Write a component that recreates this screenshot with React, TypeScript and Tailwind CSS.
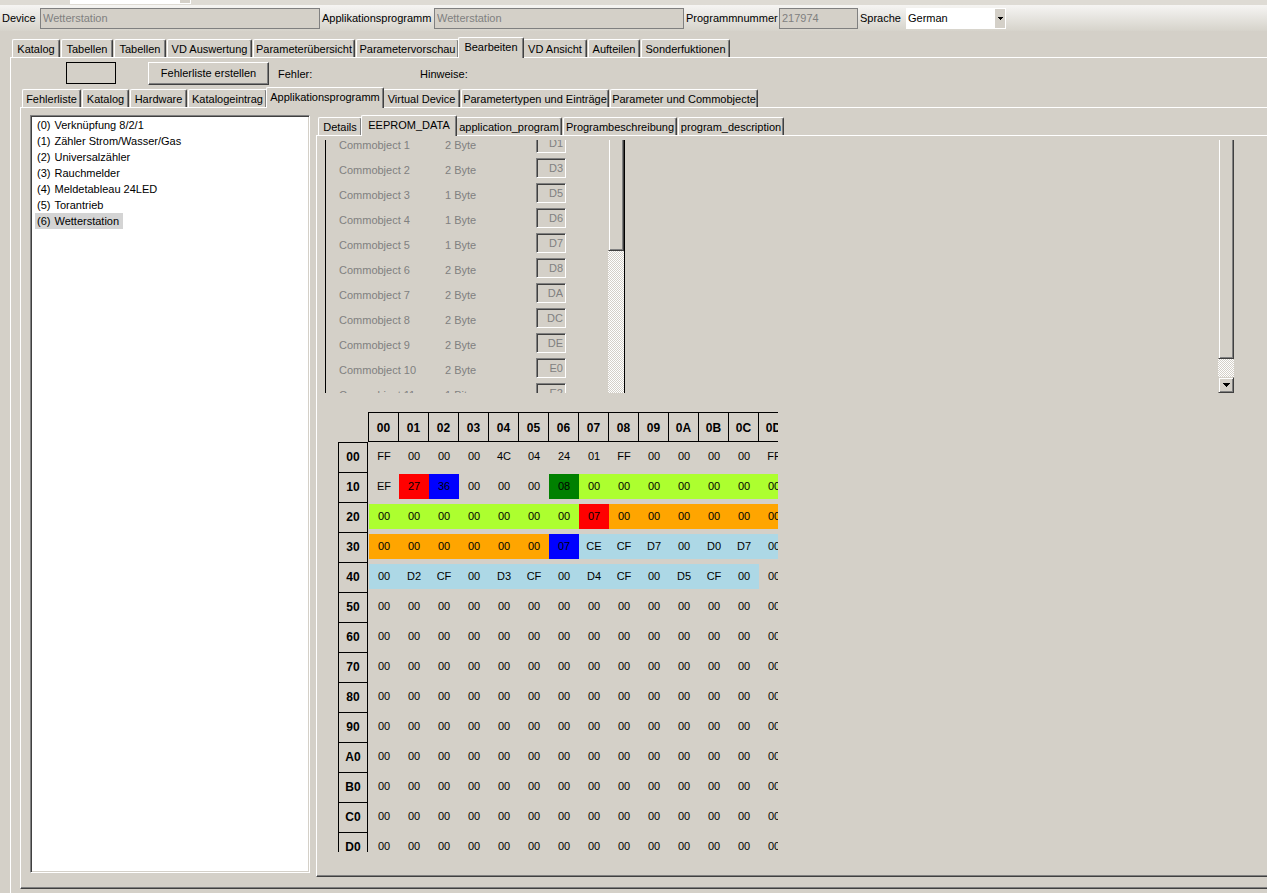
import React, { useId } from "react";

type Tab = [label: string, width: string];

const ROW1: Tab[] = [
  ["Katalog", "w-12"],
  ["Tabellen", "w-[52px]"],
  ["Tabellen", "w-[52px]"],
  ["VD Auswertung", "w-[85px]"],
  ["Parameterübersicht", "w-[102px]"],
  ["Parametervorschau", "w-[103px]"],
  ["Bearbeiten", "w-[66px]"],
  ["VD Ansicht", "w-16"],
  ["Aufteilen", "w-[52px]"],
  ["Sonderfuktionen", "w-[89px]"],
];
const ROW2: Tab[] = [
  ["Fehlerliste", "w-[59px]"],
  ["Katalog", "w-[47px]"],
  ["Hardware", "w-[57px]"],
  ["Katalogeintrag", "w-[79px]"],
  ["Applikationsprogramm", "w-[118px]"],
  ["Virtual Device", "w-[77px]"],
  ["Parametertypen und Einträge", "w-[148px]"],
  ["Parameter und Commobjecte", "w-[148px]"],
];
const ROW3: Tab[] = [
  ["Details", "w-11"],
  ["EEPROM_DATA", "w-24"],
  ["application_program", "w-[106px]"],
  ["Programbeschreibung", "w-[114px]"],
  ["program_description", "w-[106px]"],
];

const PROGRAMS = ["Verknüpfung 8/2/1", "Zähler Strom/Wasser/Gas", "Universalzähler", "Rauchmelder", "Meldetableau 24LED", "Torantrieb", "Wetterstation"];

const OBJECTS: [string, string, string][] = [
  ["Commobject 1", "2 Byte", "D1"],
  ["Commobject 2", "2 Byte", "D3"],
  ["Commobject 3", "1 Byte", "D5"],
  ["Commobject 4", "1 Byte", "D6"],
  ["Commobject 5", "1 Byte", "D7"],
  ["Commobject 6", "2 Byte", "D8"],
  ["Commobject 7", "2 Byte", "DA"],
  ["Commobject 8", "2 Byte", "DC"],
  ["Commobject 9", "2 Byte", "DE"],
  ["Commobject 10", "2 Byte", "E0"],
  ["Commobject 11", "1 Bit", "E2"],
];

const COLS = ["00", "01", "02", "03", "04", "05", "06", "07", "08", "09", "0A", "0B", "0C", "0D"];
const ROWS = ["00", "10", "20", "30", "40", "50", "60", "70", "80", "90", "A0", "B0", "C0", "D0"];

const BYTES: Record<string, string> = {
  "00": "FF 00 00 00 4C 04 24 01 FF 00 00 00 00 FF",
  "10": "EF 27 36 00 00 00 08 00 00 00 00 00 00 00",
  "20": "00 00 00 00 00 00 00 07 00 00 00 00 00 00",
  "30": "00 00 00 00 00 00 07 CE CF D7 00 D0 D7 00",
  "40": "00 D2 CF 00 D3 CF 00 D4 CF 00 D5 CF 00 00",
};
const EMPTY = "00 00 00 00 00 00 00 00 00 00 00 00 00 00";

// One letter per byte: the memory area it belongs to.
const AREAS: Record<string, string> = {
  "10": ".rb...dggggggg",
  "20": "gggggggroooooo",
  "30": "oooooobllllllll",
  "40": "lllllllllllll.",
};
const AREA_CLASS: Record<string, string> = {
  r: "bg-[#ff0000]",
  b: "bg-[#0000ff]",
  d: "bg-[#008000]",
  g: "bg-[#adff2f]",
  o: "bg-[#ffa500]",
  l: "bg-[#add8e6]",
};

function Tabs({ items, selected, label }: { items: Tab[]; selected: number; label: string }) {
  return (
    <div role="tablist" aria-label={label} className="flex h-5 shrink-0 items-end gap-px pl-0.5">
      {items.map(([text, width], i) => (
        <button
          key={i}
          type="button"
          role="tab"
          aria-selected={i === selected}
          className={
            "flex shrink-0 items-center justify-center whitespace-nowrap rounded-t-[2px] border-t border-l border-r border-t-white border-l-white border-r-[#404040] bg-[#d4d0c8] shadow-[inset_-1px_0_0_#808080] " +
            (i === selected ? "relative z-10 -mx-0.5 -mb-px h-[21px] pb-0.5 " : "h-[18px] pt-0.5 ") +
            width
          }
        >
          {text}
        </button>
      ))}
    </div>
  );
}

function Field({ label, value, labelWidth, width }: { label: string; value: string; labelWidth: string; width: string }) {
  const id = useId();
  return (
    <>
      <label htmlFor={id} className={"shrink-0 whitespace-nowrap pl-0.5 " + labelWidth}>{label}</label>
      <input id={id} disabled value={value} readOnly className={"h-[21px] shrink-0 border border-[#808080] bg-[#d4d0c8] px-0.5 text-[#808080] " + width} />
    </>
  );
}

const RAISED = "border border-t-[#d4d0c8] border-l-[#d4d0c8] border-b-[#404040] border-r-[#404040] bg-[#d4d0c8] shadow-[inset_1px_1px_0_#fff,inset_-1px_-1px_0_#808080]";
const THUMB = "w-4 shrink-0 border border-t-0 border-l-[#d4d0c8] border-b-[#404040] border-r-[#404040] bg-[#d4d0c8] shadow-[inset_1px_0_0_#fff,inset_-1px_-1px_0_#808080]";
const TRACK = "bg-[repeating-conic-gradient(#fff_0_25%,#d4d0c8_0_50%)] bg-[length:2px_2px]";

function Arrow() {
  return (
    <svg width="7" height="4" viewBox="0 0 7 4" shapeRendering="crispEdges" aria-hidden="true">
      <path d="M0 0h7v1H0zM1 1h5v1H1zM2 2h3v1H2zM3 3h1v1H3z" fill="#000" />
    </svg>
  );
}

function CommObjects() {
  return (
    <div className="flex h-[253px] w-[909px] shrink-0 justify-between overflow-hidden">
      <div className="flex w-[300px] justify-between border-x border-black">
        <div className="-mt-[7px] ml-[13px] flex flex-col gap-[5px]">
          {OBJECTS.map(([name, size, addr]) => (
            <div key={name} className="flex h-5 shrink-0 text-[#808080]">
              <label htmlFor={name} className="w-[106px] pt-1.5">{name}</label>
              <span className="w-[91px] pt-1.5">{size}</span>
              <input
                id={name}
                disabled
                readOnly
                value={addr}
                className="h-5 w-[30px] border border-t-[#808080] border-l-[#808080] border-r-white border-b-white bg-[#d4d0c8] pr-0.5 text-right shadow-[inset_1px_1px_0_#404040]"
              />
            </div>
          ))}
        </div>
        <div className={"flex w-4 flex-col " + TRACK}>
          <div className={"h-[111px] " + THUMB} />
        </div>
      </div>
      <div className={"flex w-4 flex-col justify-between " + TRACK}>
        <div className={"h-[219px] " + THUMB} />
        <button type="button" aria-label="Nach unten" className={"flex h-4 w-4 items-center justify-center " + RAISED}>
          <Arrow />
        </button>
      </div>
    </div>
  );
}

function HexView() {
  return (
    <div className="ml-[13px] min-h-0 w-[440px] flex-1 overflow-hidden">
      <table className="w-[451px] table-fixed border-separate border-spacing-0 text-center">
        <thead>
          <tr className="h-[30px]">
            <td className="w-[31px] border-r border-black p-0" />
            {COLS.map((c) => (
              <th key={c} scope="col" className="w-[30px] border-y border-r border-black p-0 pt-0.5 text-xs leading-[13px] font-bold">{c}</th>
            ))}
          </tr>
        </thead>
        <tbody>
          {ROWS.map((r) => (
            <tr key={r} className="h-[30px]">
              <th scope="row" className="p-0 text-xs leading-[13px] font-bold">
                <div className="flex h-[30px] w-[30px] items-center justify-center border-x border-t border-black">{r}</div>
              </th>
              {(BYTES[r] ?? EMPTY).split(" ").map((b, i) => (
                <td key={i} className="p-0 pb-px">
                  <div className={"flex h-[25px] items-center justify-center " + (AREA_CLASS[(AREAS[r] ?? "")[i]] ?? "")}>{b}</div>
                </td>
              ))}
            </tr>
          ))}
        </tbody>
      </table>
    </div>
  );
}

export default function App() {
  return (
    <div className="flex h-screen flex-col overflow-hidden bg-[#d4d0c8] font-['Liberation_Sans',Arial,sans-serif] text-[11px] leading-[13px] text-black">
      <div className="flex h-[5px] shrink-0 items-start bg-[#dedbd4] pl-[70px]">
        <div className="flex h-1 w-[121px] justify-end border-r border-b border-white bg-white">
          <div className="h-[3px] w-2.5 bg-[#d4d0c8]" />
        </div>
      </div>

      <div className="flex h-[26px] shrink-0 items-center bg-linear-to-b from-[#f6f5f3] to-[#d6d3cb]">
        <Field label="Device" value="Wetterstation" labelWidth="w-10" width="w-[280px]" />
        <Field label="Applikationsprogramm" value="Wetterstation" labelWidth="w-[114px]" width="w-[250px]" />
        <Field label="Programmnummer" value="217974" labelWidth="w-[95px]" width="w-[79px]" />
        <label htmlFor="lang" className="w-12 shrink-0 pl-0.5">Sprache</label>
        <div className="relative h-[21px] w-[100px] shrink-0">
          <select id="lang" defaultValue="German" className="h-[21px] w-full appearance-none bg-white pl-0.5">
            <option>German</option>
          </select>
          <span className="pointer-events-none absolute top-px right-px flex h-[19px] w-2.5 items-center justify-center bg-[#d4d0c8]">
            <svg width="5" height="3" viewBox="0 0 5 3" shapeRendering="crispEdges" aria-hidden="true">
              <path d="M0 0h5v1H0zM1 1h3v1H1zM2 2h1v1H2z" fill="#000" />
            </svg>
          </span>
        </div>
      </div>

      <div className="mt-1.5 ml-2.5 flex min-h-0 flex-1 flex-col">
        <Tabs items={ROW1} selected={6} label="Bereiche" />
        <div className="flex min-h-0 flex-1 flex-col border-t border-l border-white pb-1 pl-[9px]">
          <div className="flex h-[29px] shrink-0 items-start pt-1">
            <div className="ml-[46px] h-[22px] w-[50px] border border-black" />
            <button type="button" className="ml-8 h-[23px] w-[121px] border border-t-white border-l-white border-r-[#404040] border-b-[#404040] shadow-[inset_-1px_-1px_0_#808080]">
              Fehlerliste erstellen
            </button>
            <span className="ml-[9px] w-[142px] pt-1.5">Fehler:</span>
            <span className="pt-1.5">Hinweise:</span>
          </div>

          <Tabs items={ROW2} selected={4} label="Bearbeiten" />
          <div className="flex min-h-0 flex-1 gap-1.5 border-t border-l border-b border-t-white border-l-white border-b-[#404040] pt-[7px] pb-[11px] pl-[9px] shadow-[inset_0_-1px_0_#808080]">
            <ul className="mb-1 w-[280px] shrink-0 border border-t-[#808080] border-l-[#808080] border-r-white border-b-white bg-white pt-px pl-1 shadow-[inset_1px_1px_0_#404040,inset_-1px_-1px_0_#d4d0c8]">
              {PROGRAMS.map((p, i) => (
                <li key={p} className={"flex h-4 w-fit items-center gap-1 pr-1 pl-0.5 " + (i === 6 ? "bg-[#d4d4d4]" : "")}>
                  <span>({i})</span>
                  <span>{p}</span>
                </li>
              ))}
            </ul>

            <div className="flex min-w-0 flex-1 flex-col">
              <Tabs items={ROW3} selected={1} label="Applikationsprogramm" />
              <div className="flex min-h-0 flex-1 flex-col gap-[19px] overflow-hidden border-t border-l border-b border-t-white border-l-white border-b-[#404040] pt-1 pb-6 pl-2 shadow-[inset_0_-1px_0_#808080]">
                <CommObjects />
                <HexView />
              </div>
            </div>
          </div>
        </div>
      </div>
    </div>
  );
}
